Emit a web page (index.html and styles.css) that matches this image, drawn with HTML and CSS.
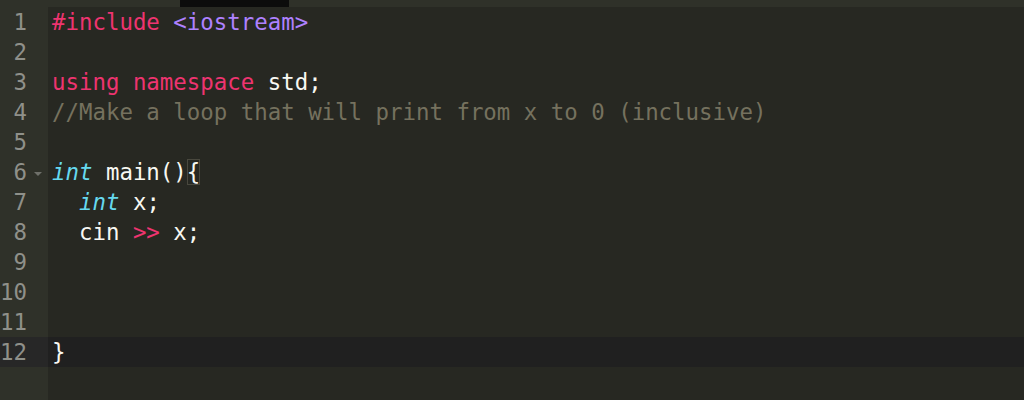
FILE: index.html
```html
<!DOCTYPE html>
<html>
<head>
<meta charset="utf-8">
<link rel="stylesheet" href="styles.css">
</head>
<body>
<div class="topbar"><div class="tab"></div></div>
<div class="editor">
  <div class="gutter">
    <div class="gl">1</div>
    <div class="gl">2</div>
    <div class="gl">3</div>
    <div class="gl">4</div>
    <div class="gl">5</div>
    <div class="gl fold">6<span class="arrow"></span></div>
    <div class="gl">7</div>
    <div class="gl">8</div>
    <div class="gl">9</div>
    <div class="gl">10</div>
    <div class="gl">11</div>
    <div class="gl active">12</div>
  </div>
  <div class="code">
    <div class="ln"><span class="kw">#include</span> <span class="cn">&lt;iostream&gt;</span></div>
    <div class="ln"></div>
    <div class="ln"><span class="kw">using</span> <span class="kw">namespace</span> std;</div>
    <div class="ln"><span class="cm">//Make a loop that will print from x to 0 (inclusive)</span></div>
    <div class="ln"></div>
    <div class="ln"><span class="ty">int</span> main()<span class="bm">{</span></div>
    <div class="ln">  <span class="ty">int</span> x;</div>
    <div class="ln">  cin <span class="kw">&gt;&gt;</span> x;</div>
    <div class="ln"></div>
    <div class="ln"></div>
    <div class="ln"></div>
    <div class="ln active">}</div>
  </div>
</div>
</body>
</html>
```
FILE: styles.css
```css
html, body {
  margin: 0;
  padding: 0;
  height: 100%;
  background: #272822;
  overflow: hidden;
}
.topbar {
  height: 7px;
  background: #2f3129;
  display: flex;
}
.tab {
  margin-left: 180px;
  width: 109px;
  background: #0c0c0c;
}
.editor {
  display: flex;
  height: 393px;
  font-family: "DejaVu Sans Mono", monospace;
  font-size: 22.4px;
  line-height: 30px;
}
.gutter {
  width: 48px;
  background: #2f3129;
  color: #8f908a;
  flex: none;
}
.gl {
  height: 30px;
  text-align: right;
  padding-right: 21px;
  position: relative;
}
.gl.active {
  background: #272727;
}
.arrow {
  position: absolute;
  left: 34px;
  top: 15px;
  width: 0;
  height: 0;
  border-left: 4px solid transparent;
  border-right: 4px solid transparent;
  border-top: 4px solid #6f706a;
}
.code {
  flex: 1;
  color: #f8f8f2;
}
.ln {
  height: 30px;
  padding-left: 4px;
  white-space: pre;
}
.ln.active {
  background: #202020;
}
.kw { color: #ee3470; }
.cn { color: #ae81ff; }
.cm { color: #75715e; }
.ty { color: #66d9ef; font-style: italic; }
.bm {
  outline: 1px solid #49483e;
  outline-offset: -1px;
}
```
